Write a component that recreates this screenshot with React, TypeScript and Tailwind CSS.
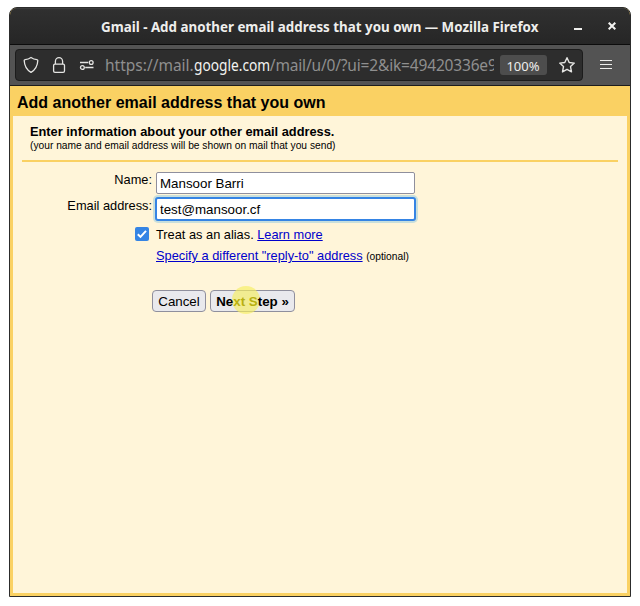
import { useState } from "react";

function TitleBar() {
  return (
    <header className="flex h-[37px] shrink-0 items-center border-b border-[#0c0c0c] bg-linear-to-b from-[#303030] to-[#262626] pl-[91px] font-['Noto_Sans',sans-serif] text-[#eeeeec] shadow-[inset_0_1px_0_#3b3b3b]">
      <h1 className="w-[440px] shrink-0 whitespace-nowrap pb-px text-[14.500px] font-bold leading-5">
        <span className="inline-block origin-left scale-x-[0.921]">
          Gmail - Add another email address that you own — Mozilla Firefox
        </span>
      </h1>
      <button aria-label="Minimize" className="ml-[33px] mt-[5px] h-[2px] w-2 shrink-0 bg-[#eeeeec]" />
      <button aria-label="Close" className="ml-[26px] shrink-0">
        <svg width="8" height="8" viewBox="0 0 8 8" fill="none" stroke="#f4f4f2" strokeWidth="2">
          <path d="M.7.7l6.6 6.6M7.3.7L.7 7.3" />
        </svg>
      </button>
    </header>
  );
}

function Toolbar() {
  return (
    <div className="flex h-[41px] shrink-0 items-center border-b border-[#1c1c1c] bg-[#535353] pl-[5px] font-['Noto_Sans',sans-serif]">
      <div className="flex h-8 w-[568px] items-center rounded-[4px] border border-[#1c1c1c] bg-[#2d2d2d] pl-[6px]">
        <svg width="18" height="18" viewBox="0 0 18 18" fill="none" stroke="#e4e4e2" strokeWidth="1.3" strokeLinejoin="round">
          <path d="M9 1.500c1.600 1.200 3.700 2 5.900 2.100.5 0 .9.4.9.900-.2 5.200-2.300 9.200-6.800 11.900C4.500 13.700 2.400 9.700 2.200 4.500c0-.5.4-.9.9-.9C5.300 3.500 7.400 2.700 9 1.500Z" />
        </svg>
        <svg className="ml-[10px]" width="18" height="18" viewBox="0 0 18 18" fill="none" stroke="#e4e4e2" strokeWidth="1.3">
          <rect x="3.600" y="8.200" width="10.900" height="8.200" rx="1.400" />
          <path d="M5.400 8V5.200a3.600 3.600 0 0 1 7.200 0V8" />
        </svg>
        <svg className="ml-[10px]" width="18" height="18" viewBox="0 0 18 18" fill="none" stroke="#e4e4e2" strokeWidth="1.3">
          <path d="M2 6.500h8.200M7.200 11.500h8.300" />
          <circle cx="13.200" cy="6.500" r="1.900" />
          <circle cx="4.400" cy="11.500" r="1.900" />
        </svg>
        <div className="ml-[9px] w-[389px] shrink-0 overflow-hidden whitespace-nowrap text-[15.500px] leading-6 text-[#8f8f8f]">
          https://mail.
          <span className="-mr-[10px] inline-block origin-left scale-x-[0.885] text-[#f3f3f1]">google.com</span>
          <span className="tracking-[-0.17px]">/mail/u/0/?ui=2&amp;ik=49420336e9</span>
        </div>
        <div className="ml-[6px] flex h-5 w-[47px] shrink-0 items-center justify-center rounded-[3px] bg-[#4d4d4d] pr-px pt-[3px] text-[13px] text-[#eeeeec]">
          100%
        </div>
        <svg className="ml-[11px] shrink-0" width="18" height="18" viewBox="0 0 18 18" fill="none" stroke="#e4e4e2" strokeWidth="1.400" strokeLinejoin="round">
          <path d="M9 1.700l2.200 4.800 5.100.6-3.800 3.500 1 5.300L9 13.300l-4.500 2.600 1-5.300L1.700 7.100l5.100-.6Z" />
        </svg>
      </div>
      <div className="ml-[17px] flex w-3 flex-col gap-[3px] pb-px">
        <div className="h-px bg-[#eeeeec]" />
        <div className="h-px bg-[#eeeeec]" />
        <div className="h-px bg-[#eeeeec]" />
      </div>
    </div>
  );
}

export default function App() {
  const [name, setName] = useState("Mansoor Barri");
  const [email, setEmail] = useState("test@mansoor.cf");
  return (
    <div className="h-[606px] w-[640px] overflow-hidden bg-white px-[9px] pt-[7px] font-['Liberation_Sans',Arial,sans-serif] text-[12.800px] text-black">
      <div className="flex h-[590px] w-[622px] flex-col overflow-hidden rounded-t-[8px] border border-[#2c2c2c] bg-[#fad163]">
        <TitleBar />
        <Toolbar />
        <h2 className="flex h-[30px] shrink-0 items-center pl-[7px] pt-[3px] text-[16px] font-bold">
          Add another email address that you own
        </h2>
        <main className="mx-[3px] mb-[3px] flex-1 bg-[#fff5d9]">
          <div className="mx-[9px] h-[46px] border-b-2 border-[#fad163] pl-2 pt-[8px]">
            <p className="font-bold leading-[15px]">Enter information about your other email address.</p>
            <p className="text-[10.240px] leading-[13px]">(your name and email address will be shown on mail that you send)</p>
          </div>
          <form className="pt-[10px]" onSubmit={(e) => e.preventDefault()}>
            <div className="flex h-[25px]">
              <label htmlFor="name" className="w-[139px] text-right leading-[15px]">Name:</label>
              <input id="name" value={name} onChange={(e) => setName(e.target.value)} className="ml-1 h-[22px] w-[259px] rounded-[2px] border border-[#8f8f9d] bg-white pl-[3px] text-[13.333px] outline-none" />
            </div>
            <div className="flex h-[27px]">
              <label htmlFor="email" className="w-[139px] pt-px text-right leading-[15px]">Email address:</label>
              <input id="email" value={email} onChange={(e) => setEmail(e.target.value)} className="ml-[3px] h-6 w-[261px] rounded-[3px] border-2 border-[#3584e4] bg-white pl-[3px] text-[13.333px] shadow-[0_0_0_2px_#c8dfdc] outline-none" />
            </div>
            <div className="flex h-[20px] items-center pl-[122px]">
              <div role="checkbox" aria-checked="true" className="flex h-[14px] w-[14px] items-center justify-center rounded-[2px] bg-[#3584e4]">
                <svg width="12" height="12" viewBox="0 0 12 12" fill="none" stroke="white" strokeWidth="2">
                  <path d="M1.800 6.200l2.700 2.700 5.500-6" />
                </svg>
              </div>
              <p className="ml-[7px] leading-[15px]">
                Treat as an alias. <a className="text-[#0000cc] underline" href="#learn">Learn more</a>
              </p>
            </div>
            <p className="ml-[143px] mt-[4px] leading-[15px]">
              <a className="text-[#0000cc] underline" href="#reply">Specify a different "reply-to" address</a>{" "}
              <span className="text-[10.240px]">(optional)</span>
            </p>
            <div className="ml-[139px] mt-[26px] flex gap-1 text-[13.333px]">
              <button className="h-[22px] w-[54px] rounded-[4px] border border-[#8f8f9d] bg-[#e9e9ed] pt-px leading-5">Cancel</button>
              <button className="relative h-[22px] w-[85px] rounded-[4px] border border-[#8f8f9d] bg-[#e9e9ed] pt-px font-bold leading-5">
                <span className="absolute left-[21px] top-[-5px] h-[28px] w-[28px] rounded-full bg-[#f6ee60]/65" />
                <span className="relative">
                  Ne<span className="text-[#b8b010]">xt S</span>tep »
                </span>
              </button>
            </div>
          </form>
        </main>
      </div>
    </div>
  );
}
